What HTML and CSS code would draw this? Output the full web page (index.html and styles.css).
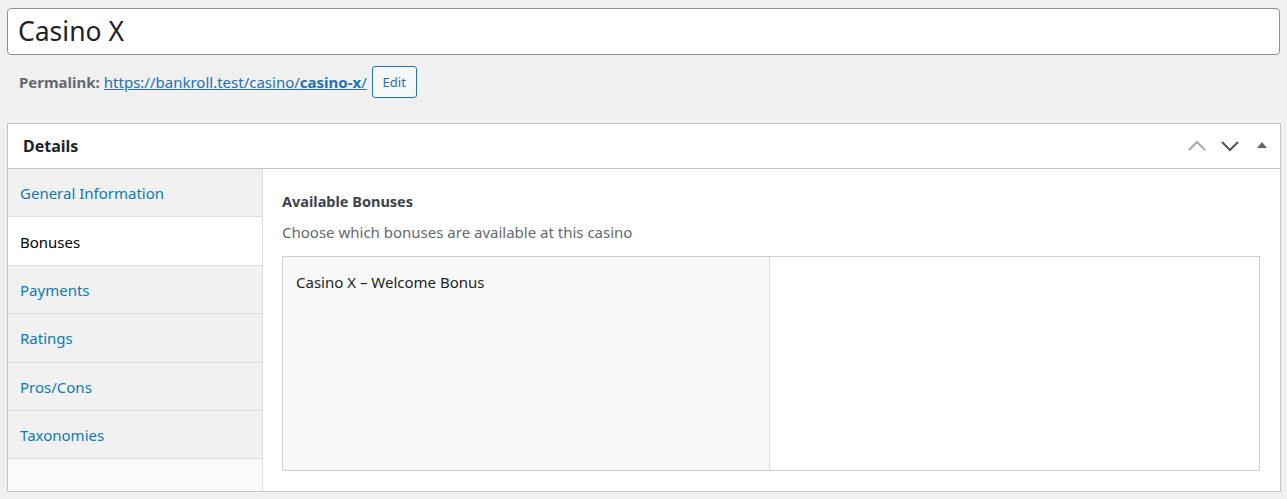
FILE: index.html
```html
<!DOCTYPE html>
<html>
<head>
<meta charset="utf-8">
<link rel="stylesheet" href="styles.css">
</head>
<body>
<div class="wrap">
  <div class="title-input">Casino X</div>
  <div class="permalink">
    <span class="plabel">Permalink:</span>
    <a class="plink" href="#">https://bankroll.test/casino/<b>casino-x</b>/</a>
    <span class="edit-btn">Edit</span>
  </div>
  <div class="postbox">
    <div class="pb-header">
      <h2 class="pb-title">Details</h2>
      <div class="pb-actions">
        <svg class="ico" width="18" height="20" viewBox="0 0 18 20"><path d="M1 14 L9 6 L17 14" fill="none" stroke="#a7aaad" stroke-width="2"/></svg>
        <svg class="ico" width="18" height="20" viewBox="0 0 18 20"><path d="M1 6 L9 14 L17 6" fill="none" stroke="#50575e" stroke-width="2"/></svg>
        <svg class="ico tri" width="12" height="20" viewBox="0 0 12 20"><path d="M1 12 L6 6 L11 12 Z" fill="#646970"/></svg>
      </div>
    </div>
    <div class="pb-body">
      <ul class="tabs">
        <li class="tab">General Information</li>
        <li class="tab active">Bonuses</li>
        <li class="tab">Payments</li>
        <li class="tab">Ratings</li>
        <li class="tab">Pros/Cons</li>
        <li class="tab">Taxonomies</li>
      </ul>
      <div class="panel">
        <div class="field-label">Available Bonuses</div>
        <div class="field-desc">Choose which bonuses are available at this casino</div>
        <div class="rel-box">
          <div class="rel-choices">
            <div class="rel-item">Casino X – Welcome Bonus</div>
          </div>
          <div class="rel-values"></div>
        </div>
      </div>
    </div>
  </div>
</div>
</body>
</html>
```

FILE: styles.css
```css
* { box-sizing: border-box; }
html, body { margin: 0; padding: 0; }
body {
  background: #f0f0f1;
  font-family: "Segoe UI", "Noto Sans", "Open Sans", sans-serif;
  color: #3c434a;
}
.wrap {
  padding: 8px 7px 0 7px;
  width: 1287px;
}
.title-input {
  width: 1273px;
  height: 47px;
  background: #fff;
  border: 1px solid #8c8f94;
  border-radius: 4px;
  font-size: 26.5px;
  color: #1d2327;
  padding: 0 10px;
  line-height: 45px;
}
.permalink {
  display: flex;
  align-items: center;
  height: 32px;
  margin-top: 11px;
  padding-left: 12px;
  font-size: 15px;
}
.plabel {
  font-weight: bold;
  color: #646970;
  margin-right: 4px;
}
.plink {
  color: #2271b1;
  text-decoration: underline;
  margin-right: 5px;
}
.plink b { font-weight: bold; }
.edit-btn {
  display: inline-flex;
  align-items: center;
  justify-content: center;
  width: 45px;
  height: 32px;
  border: 1px solid #2271b1;
  border-radius: 3px;
  background: #f6f7f7;
  color: #2271b1;
  font-size: 13px;
}
.postbox {
  margin-top: 25px;
  width: 1274px;
  height: 369px;
  background: #fff;
  border: 1px solid #c3c4c7;
  display: flex;
  flex-direction: column;
}
.pb-header {
  height: 45px;
  flex: none;
  border-bottom: 1px solid #c3c4c7;
  display: flex;
  align-items: center;
  justify-content: space-between;
  padding: 0 12px 0 15px;
}
.pb-title {
  margin: 0;
  font-size: 16px;
  font-weight: bold;
  color: #1d2327;
}
.pb-actions {
  display: flex;
  align-items: center;
  gap: 15px;
}
.ico { display: block; }
.tri { margin-left: 2px; }
.pb-body {
  flex: 1;
  display: flex;
}
.tabs {
  list-style: none;
  margin: 0;
  padding: 0;
  width: 255px;
  flex: none;
  background: #fafafa;
  border-right: 1px solid #dcdcde;
}
.tab {
  height: 48.4px;
  display: flex;
  align-items: center;
  padding-left: 12px;
  padding-top: 1px;
  background: #f1f1f1;
  border-bottom: 1px solid #dcdcde;
  color: #0a7bb8;
  font-size: 15px;
}
.tab.active {
  background: #fff;
  color: #000;
}
.panel {
  flex: 1;
  padding: 22px 20px 0 19px;
}
.field-label {
  font-weight: bold;
  font-size: 14.5px;
  color: #3c434a;
  line-height: 20px;
}
.field-desc {
  font-size: 15px;
  color: #646970;
  line-height: 20px;
  margin-top: 11px;
}
.rel-box {
  margin-top: 14px;
  height: 215px;
  border: 1px solid #ccd0d4;
  display: flex;
}
.rel-choices {
  width: 487px;
  flex: none;
  background: #f9f9f9;
  border-right: 1px solid #dcdcde;
  padding: 15px 13px;
}
.rel-item {
  font-size: 15px;
  color: #1d2327;
  line-height: 20px;
}
.rel-values {
  flex: 1;
  background: #fff;
}
```
